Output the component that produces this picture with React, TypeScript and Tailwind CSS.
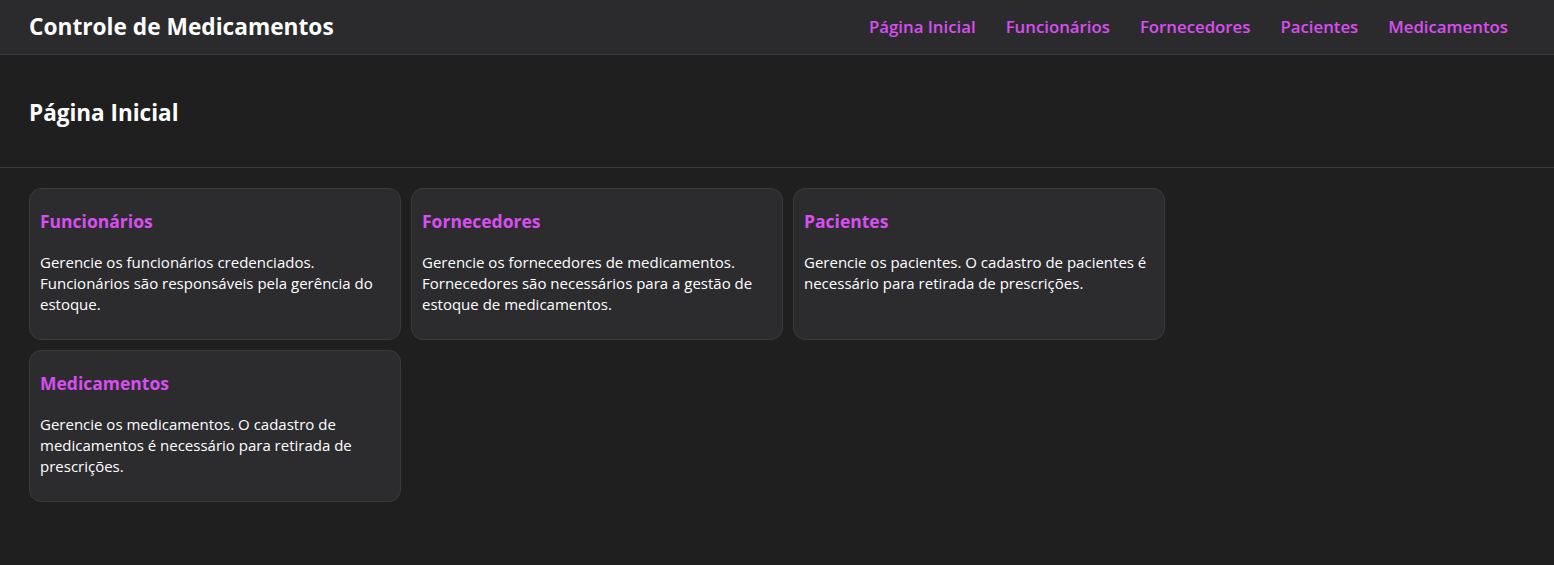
const links = ["Página Inicial", "Funcionários", "Fornecedores", "Pacientes", "Medicamentos"];

const cards = [
  {
    title: "Funcionários",
    text: "Gerencie os funcionários credenciados. Funcionários são responsáveis pela gerência do estoque.",
  },
  {
    title: "Fornecedores",
    text: "Gerencie os fornecedores de medicamentos. Fornecedores são necessários para a gestão de estoque de medicamentos.",
  },
  {
    title: "Pacientes",
    text: "Gerencie os pacientes. O cadastro de pacientes é necessário para retirada de prescrições.",
  },
  {
    title: "Medicamentos",
    text: "Gerencie os medicamentos. O cadastro de medicamentos é necessário para retirada de prescrições.",
  },
];

export default function App() {
  return (
    <div className="min-h-[565px] bg-[#1f1f1f] font-['Open_Sans',sans-serif] text-white">
      <header className="flex h-[55px] items-center justify-between border-b border-[#3a3a3c] bg-[#2b2b2d] pl-[29px] pr-[46px]">
        <h1 className="text-[22.7px] font-bold">Controle de Medicamentos</h1>
        <nav className="flex gap-[30px]">
          {links.map((l) => (
            <a key={l} href="#" className="text-[16.8px] font-semibold text-[#d94ef0]">
              {l}
            </a>
          ))}
        </nav>
      </header>
      <div className="flex h-[113px] items-center border-b border-[#3a3a3c] px-[29px] pt-[4px]">
        <h2 className="text-[22.5px] font-bold">Página Inicial</h2>
      </div>
      <main className="grid grid-cols-[repeat(3,372px)] gap-[10px] px-[29px] pt-[20px]">
        {cards.map((c) => (
          <div key={c.title} className="h-[152px] rounded-xl border border-[#3a3a3c] bg-[#2c2c2f] px-[10px] pt-[19px]">
            <h3 className="text-[17.5px] font-bold text-[#d94ef0]">{c.title}</h3>
            <p className="mt-[18px] text-[15px] leading-[21px]">{c.text}</p>
          </div>
        ))}
      </main>
    </div>
  );
}
